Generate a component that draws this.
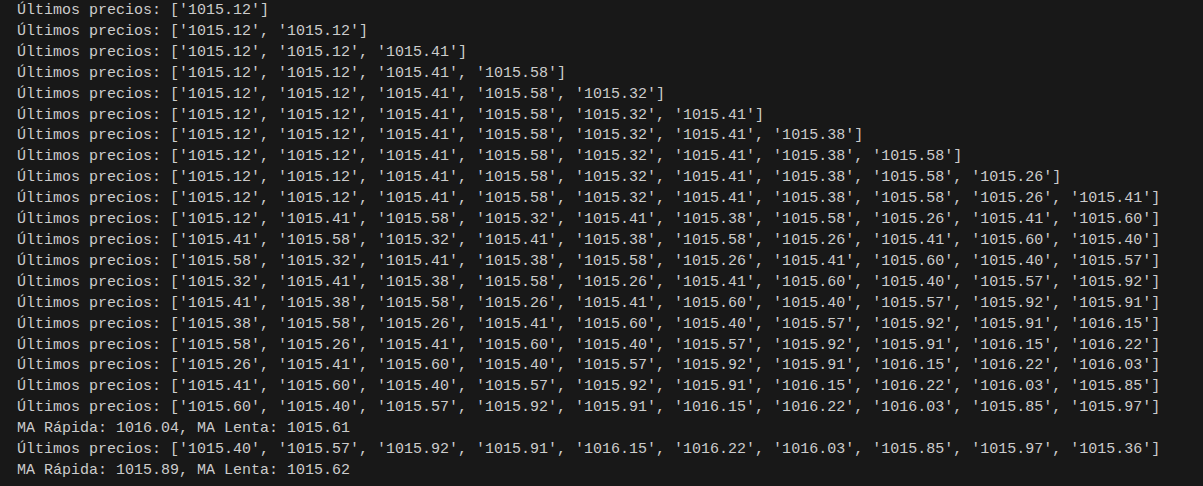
import React from "react";

const lines = [
  "Últimos precios: ['1015.12']",
  "Últimos precios: ['1015.12', '1015.12']",
  "Últimos precios: ['1015.12', '1015.12', '1015.41']",
  "Últimos precios: ['1015.12', '1015.12', '1015.41', '1015.58']",
  "Últimos precios: ['1015.12', '1015.12', '1015.41', '1015.58', '1015.32']",
  "Últimos precios: ['1015.12', '1015.12', '1015.41', '1015.58', '1015.32', '1015.41']",
  "Últimos precios: ['1015.12', '1015.12', '1015.41', '1015.58', '1015.32', '1015.41', '1015.38']",
  "Últimos precios: ['1015.12', '1015.12', '1015.41', '1015.58', '1015.32', '1015.41', '1015.38', '1015.58']",
  "Últimos precios: ['1015.12', '1015.12', '1015.41', '1015.58', '1015.32', '1015.41', '1015.38', '1015.58', '1015.26']",
  "Últimos precios: ['1015.12', '1015.12', '1015.41', '1015.58', '1015.32', '1015.41', '1015.38', '1015.58', '1015.26', '1015.41']",
  "Últimos precios: ['1015.12', '1015.41', '1015.58', '1015.32', '1015.41', '1015.38', '1015.58', '1015.26', '1015.41', '1015.60']",
  "Últimos precios: ['1015.41', '1015.58', '1015.32', '1015.41', '1015.38', '1015.58', '1015.26', '1015.41', '1015.60', '1015.40']",
  "Últimos precios: ['1015.58', '1015.32', '1015.41', '1015.38', '1015.58', '1015.26', '1015.41', '1015.60', '1015.40', '1015.57']",
  "Últimos precios: ['1015.32', '1015.41', '1015.38', '1015.58', '1015.26', '1015.41', '1015.60', '1015.40', '1015.57', '1015.92']",
  "Últimos precios: ['1015.41', '1015.38', '1015.58', '1015.26', '1015.41', '1015.60', '1015.40', '1015.57', '1015.92', '1015.91']",
  "Últimos precios: ['1015.38', '1015.58', '1015.26', '1015.41', '1015.60', '1015.40', '1015.57', '1015.92', '1015.91', '1016.15']",
  "Últimos precios: ['1015.58', '1015.26', '1015.41', '1015.60', '1015.40', '1015.57', '1015.92', '1015.91', '1016.15', '1016.22']",
  "Últimos precios: ['1015.26', '1015.41', '1015.60', '1015.40', '1015.57', '1015.92', '1015.91', '1016.15', '1016.22', '1016.03']",
  "Últimos precios: ['1015.41', '1015.60', '1015.40', '1015.57', '1015.92', '1015.91', '1016.15', '1016.22', '1016.03', '1015.85']",
  "Últimos precios: ['1015.60', '1015.40', '1015.57', '1015.92', '1015.91', '1016.15', '1016.22', '1016.03', '1015.85', '1015.97']",
  "MA Rápida: 1016.04, MA Lenta: 1015.61",
  "Últimos precios: ['1015.40', '1015.57', '1015.92', '1015.91', '1016.15', '1016.22', '1016.03', '1015.85', '1015.97', '1015.36']",
  "MA Rápida: 1015.89, MA Lenta: 1015.62",
];

export default function App() {
  return (
    <div className="w-[1203px] h-[486px] overflow-hidden bg-[#181818]">
      <div
        className="pl-[17px] mt-[1px] text-[15px] leading-[20.9px] text-[#cccccc] whitespace-pre"
        style={{ fontFamily: '"Liberation Mono", "DejaVu Sans Mono", monospace' }}
      >
        {lines.map((l, i) => (
          <div key={i}>{l}</div>
        ))}
      </div>
    </div>
  );
}
